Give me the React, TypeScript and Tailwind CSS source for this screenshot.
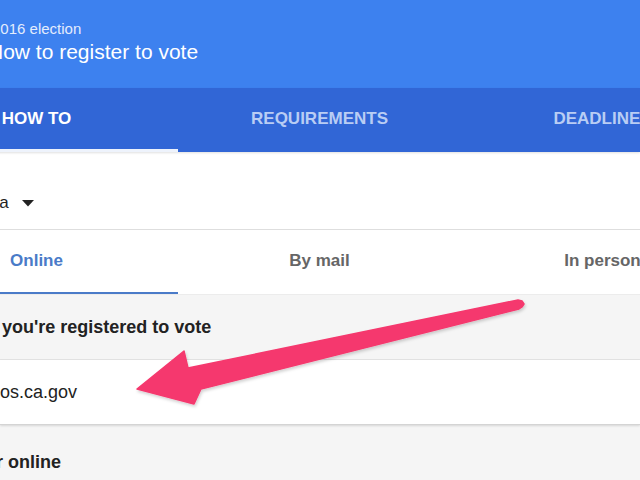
import React from "react";

const topTabs = ["How to", "Requirements", "Deadlines"];
const methodTabs = ["Online", "By mail", "In person"];

function StateArrow() {
  return (
    <svg width="12" height="7" viewBox="0 0 12 7" className="ml-[13px]">
      <polygon points="0,0 12,0 6,6.5" fill="#222" />
    </svg>
  );
}

function PinkArrow() {
  return (
    <svg
      className="absolute left-0 top-0 z-20 pointer-events-none"
      width="640"
      height="480"
      viewBox="0 0 640 480"
    >
      <defs>
        <filter id="arrowShadow" x="-10%" y="-30%" width="120%" height="160%">
          <feDropShadow dx="1" dy="2" stdDeviation="1.5" floodColor="#000" floodOpacity="0.18" />
        </filter>
      </defs>
      <polygon
        points="137,389 184,351 188,368 518,300 522,301 524,304 522,307 519,309 201,389 194,404"
        fill="#f5396e"
        stroke="#f5396e"
        strokeWidth="1.5"
        strokeLinejoin="round"
        filter="url(#arrowShadow)"
      />
    </svg>
  );
}

export default function App() {
  return (
    <div
      className="relative w-[640px] h-[480px] overflow-hidden bg-white text-[#222]"
      style={{ fontFamily: '"Liberation Sans", Arial, sans-serif' }}
    >
      {/* Header */}
      <div className="h-[88px] bg-[#3d81ef] pt-[20px] text-white">
        <div className="ml-[-8px] text-[15px] leading-[18px] text-[#e3ecfd]">
          2016 election
        </div>
        <div className="ml-[-12px] mt-[2px] text-[21px] leading-[24px]">
          How to register to vote
        </div>
      </div>

      {/* Top tabs */}
      <div className="relative z-10 flex h-[64px] ml-[-105px] bg-[#3166d6] shadow-[0_1px_2px_rgba(0,0,0,0.12)]">
        {topTabs.map((tab, i) => (
          <div key={tab} className="w-[283px] shrink-0 flex flex-col">
            <div
              className={`flex-1 flex items-center justify-center text-[17px] font-bold uppercase ${
                i === 0 ? "text-white" : "text-[#b9cdf4]"
              }`}
            >
              {tab}
            </div>
            <div className={`h-[3px] ${i === 0 ? "bg-[#eef3fc]" : "bg-transparent"}`} />
          </div>
        ))}
      </div>

      {/* State picker */}
      <div className="h-[78px] pt-[25px] flex items-center border-b border-[#dedede]">
        <span className="ml-[-63px] text-[17px] leading-[20px] text-[#222]">California</span>
        <StateArrow />
      </div>

      {/* Method tabs */}
      <div className="flex h-[65px] ml-[-105px] border-b border-[#ececec]">
        {methodTabs.map((tab, i) => (
          <div key={tab} className="w-[283px] shrink-0 flex flex-col">
            <div
              className={`flex-1 flex items-center justify-center text-[17px] font-bold ${
                i === 0 ? "text-[#4a7bc8]" : "text-[#666]"
              }`}
            >
              {tab}
            </div>
            <div className={`h-[2px] ${i === 0 ? "bg-[#4a7bc8]" : "bg-transparent"}`} />
          </div>
        ))}
      </div>

      {/* Check registration */}
      <div className="h-[65px] flex items-center bg-[#f5f5f5] border-b border-[#e3e3e3]">
        <span className="ml-[-73px] text-[18px] font-bold">Check if you're registered to vote</span>
      </div>
      <div className="relative z-10 h-[65px] flex items-center bg-white border-b border-[#d4d4d4] shadow-[0_1px_2px_rgba(0,0,0,0.12)]">
        <span className="ml-[-9px] text-[18px] text-[#222]">sos.ca.gov</span>
      </div>

      {/* Register online */}
      <div className="h-[60px] bg-[#f5f5f5] pt-[26px]">
        <div className="ml-[-69px] text-[18px] leading-[22px] font-bold">Register online</div>
      </div>

      <PinkArrow />
    </div>
  );
}
